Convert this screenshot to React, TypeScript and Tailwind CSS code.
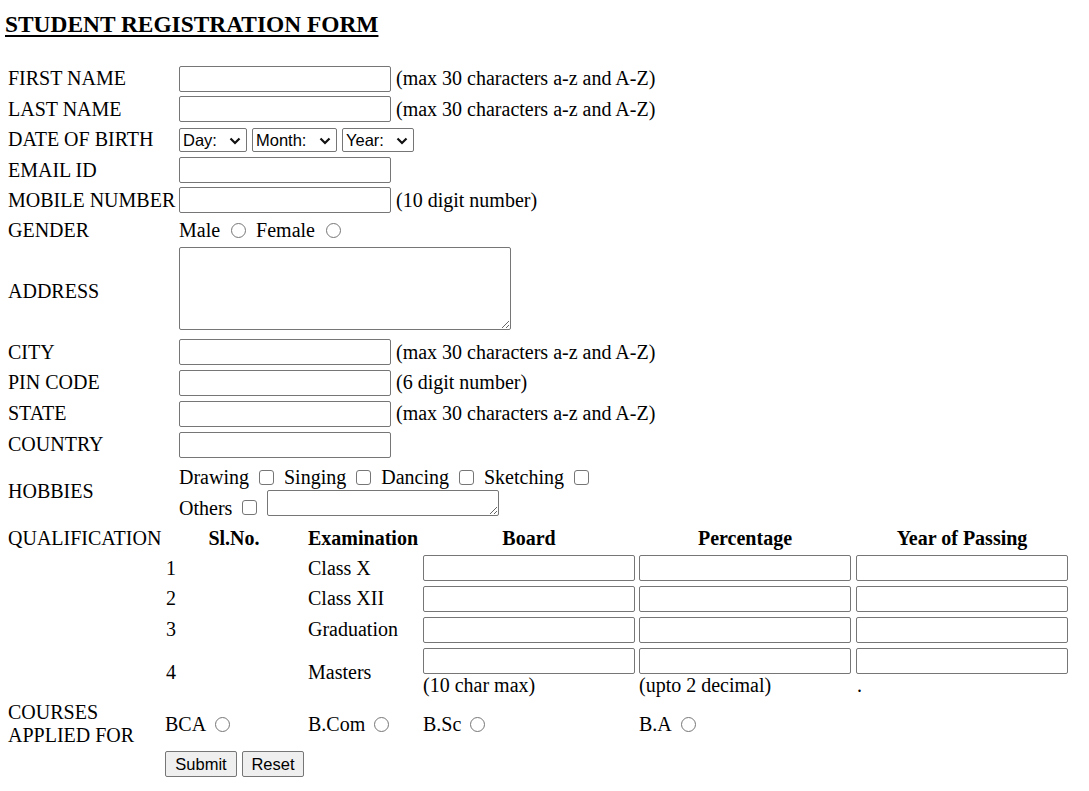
import React from 'react';

const inputCls = 'w-[212px] h-[26px] border border-[#767676] rounded-[2px] bg-white px-[2px] outline-none';
const sans = "font-['Liberation_Sans',Arial,sans-serif]";

function Radio({ cls = '' }: { cls?: string }) {
  return <span role="radio" aria-checked="false" className={`inline-block w-[15px] h-[15px] rounded-full border border-[#767676] bg-white shrink-0 ${cls}`} />;
}

function Check({ cls = '' }: { cls?: string }) {
  return <span role="checkbox" aria-checked="false" className={`inline-block w-[15px] h-[15px] rounded-[3px] border border-[#767676] bg-white shrink-0 ${cls}`} />;
}

function Chevron() {
  return (
    <svg width="12" height="8" viewBox="0 0 12 8" className="absolute right-[6px] top-[9px] pointer-events-none">
      <path d="M1.5 1.5 L6 6 L10.5 1.5" fill="none" stroke="#111" strokeWidth="2.2" />
    </svg>
  );
}

function Select({ label, w }: { label: string; w: string }) {
  return (
    <div className={`relative ${w} h-[24px]`}>
      <select
        className={`appearance-none w-full h-full border border-[#767676] rounded-[2px] bg-white pl-[3px] text-[16.5px] text-black ${sans} outline-none`}
      >
        <option>{label}</option>
      </select>
      <Chevron />
    </div>
  );
}

function Row({ label, h, children }: { label: string; h: string; children: React.ReactNode }) {
  return (
    <div className={`flex items-center ${h}`}>
      <div className="w-[174px] pl-[3px] shrink-0">{label}</div>
      <div className="flex items-center">{children}</div>
    </div>
  );
}

const note30 = '(max 30 characters a-z and A-Z)';

export default function App() {
  const quals = [
    { n: '1', exam: 'Class X', h: 'h-[30px]' },
    { n: '2', exam: 'Class XII', h: 'h-[31px]' },
    { n: '3', exam: 'Graduation', h: 'h-[31px]' },
  ];

  return (
    <div className="min-h-screen bg-white text-black text-[20px] leading-[23px] font-['Liberation_Serif','Times_New_Roman',serif] pl-[5px] pt-[11px]">
      <h3 className="text-[23.4px] leading-[27px] font-bold underline decoration-[2px] underline-offset-[3px]">
        STUDENT REGISTRATION FORM
      </h3>

      <form className="mt-[25px]">
        <Row label="FIRST NAME" h="h-[31px]">
          <input className={inputCls} />
          <span className="ml-[5px]">{note30}</span>
        </Row>
        <Row label="LAST NAME" h="h-[30px]">
          <input className={inputCls} />
          <span className="ml-[5px]">{note30}</span>
        </Row>
        <Row label="DATE OF BIRTH" h="h-[31px]">
          <div className="flex gap-[5px]">
            <Select label="Day:" w="w-[68px]" />
            <Select label="Month:" w="w-[85px]" />
            <Select label="Year:" w="w-[72px]" />
          </div>
        </Row>
        <Row label="EMAIL ID" h="h-[30px]">
          <input className={inputCls} />
        </Row>
        <Row label="MOBILE NUMBER" h="h-[30px]">
          <input className={inputCls} />
          <span className="ml-[5px]">(10 digit number)</span>
        </Row>
        <Row label="GENDER" h="h-[30px]">
          <span>Male</span>
          <Radio cls="ml-[11px] mr-[10px]" />
          <span>Female</span>
          <Radio cls="ml-[11px]" />
        </Row>

        <div className="flex h-[92px]">
          <div className="w-[174px] pl-[3px] shrink-0 self-center">ADDRESS</div>
          <div className="pt-[2px]">
            <textarea className="block w-[332px] h-[83px] border border-[#767676] rounded-[2px] bg-white outline-none" />
          </div>
        </div>

        <Row label="CITY" h="h-[30px]">
          <input className={inputCls} />
          <span className="ml-[5px]">{note30}</span>
        </Row>
        <Row label="PIN CODE" h="h-[31px]">
          <input className={inputCls} />
          <span className="ml-[5px]">(6 digit number)</span>
        </Row>
        <Row label="STATE" h="h-[31px]">
          <input className={inputCls} />
          <span className="ml-[5px]">{note30}</span>
        </Row>
        <Row label="COUNTRY" h="h-[31px]">
          <input className={inputCls} />
        </Row>

        <div className="flex h-[63px]">
          <div className="w-[174px] pl-[3px] shrink-0 self-center">HOBBIES</div>
          <div className="flex flex-col">
            <div className="flex items-center h-[26px] mt-[4px]">
              <span>Drawing</span>
              <Check cls="ml-[10px] mr-[10px]" />
              <span>Singing</span>
              <Check cls="ml-[10px] mr-[10px]" />
              <span>Dancing</span>
              <Check cls="ml-[10px] mr-[10px]" />
              <span>Sketching</span>
              <Check cls="ml-[10px]" />
            </div>
            <div className="flex items-start">
              <span className="mt-[7px]">Others</span>
              <Check cls="ml-[10px] mr-[10px] mt-[10px]" />
              <textarea className="block w-[232px] h-[26px] border border-[#767676] rounded-[2px] bg-white outline-none resize" />
            </div>
          </div>
        </div>

        {/* qualification table */}
        <div className="flex items-center h-[30px]">
          <div className="w-[160px] pl-[3px] shrink-0">QUALIFICATION</div>
          <div className="w-[143px] shrink-0"><div className="w-[138px] text-center font-bold">Sl.No.</div></div>
          <div className="w-[115px] shrink-0"><div className="w-[110px] text-center font-bold">Examination</div></div>
          <div className="w-[216px] shrink-0"><div className="w-[212px] text-center font-bold">Board</div></div>
          <div className="w-[217px] shrink-0"><div className="w-[212px] text-center font-bold">Percentage</div></div>
          <div className="w-[212px] shrink-0 text-center font-bold">Year of Passing</div>
        </div>
        {quals.map(q => (
          <div key={q.n} className={`flex items-center ${q.h}`}>
            <div className="w-[160px] shrink-0" />
            <div className="w-[143px] shrink-0 pl-[1px]">{q.n}</div>
            <div className="w-[115px] shrink-0">{q.exam}</div>
            <div className="w-[216px] shrink-0"><input className={`${inputCls} h-[25px]`} /></div>
            <div className="w-[217px] shrink-0"><input className={`${inputCls} h-[25px]`} /></div>
            <div className="w-[212px] shrink-0"><input className={`${inputCls} h-[25px]`} /></div>
          </div>
        ))}
        <div className="flex items-center h-[55px]">
          <div className="w-[160px] shrink-0" />
          <div className="w-[143px] shrink-0 pl-[1px]">4</div>
          <div className="w-[115px] shrink-0">Masters</div>
          <div className="w-[216px] shrink-0 self-start pt-[3px]">
            <input className={`${inputCls} h-[25px] block`} />
            <div>(10 char max)</div>
          </div>
          <div className="w-[217px] shrink-0 self-start pt-[3px]">
            <input className={`${inputCls} h-[25px] block`} />
            <div>(upto 2 decimal)</div>
          </div>
          <div className="w-[212px] shrink-0 self-start pt-[3px]">
            <input className={`${inputCls} h-[25px] block`} />
            <div className="pl-[1px]">.</div>
          </div>
        </div>

        <div className="flex items-center h-[48px]">
          <div className="w-[160px] pl-[3px] shrink-0">COURSES<br />APPLIED FOR</div>
          <div className="w-[143px] shrink-0 flex items-center">
            <span>BCA</span>
            <Radio cls="ml-[9px]" />
          </div>
          <div className="w-[115px] shrink-0 flex items-center">
            <span>B.Com</span>
            <Radio cls="ml-[9px]" />
          </div>
          <div className="w-[216px] shrink-0 flex items-center">
            <span>B.Sc</span>
            <Radio cls="ml-[9px]" />
          </div>
          <div className="w-[217px] shrink-0 flex items-center">
            <span>B.A</span>
            <Radio cls="ml-[9px]" />
          </div>
        </div>

        <div className="flex pt-[3px] pl-[160px] gap-[5px]">
          <button type="button" className={`w-[72px] h-[26px] border border-[#767676] rounded-[2px] bg-[#efefef] text-[16.5px] ${sans}`}>Submit</button>
          <button type="button" className={`w-[62px] h-[26px] border border-[#767676] rounded-[2px] bg-[#efefef] text-[16.5px] ${sans}`}>Reset</button>
        </div>
      </form>
    </div>
  );
}
